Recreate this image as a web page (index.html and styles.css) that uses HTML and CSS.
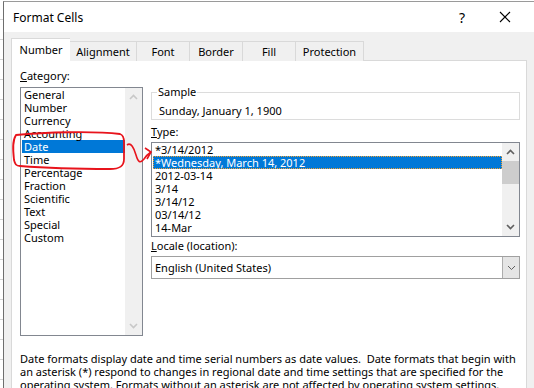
FILE: index.html
```html
<!DOCTYPE html>
<html>
<head>
    <title>Format Cells</title>
    <link rel="stylesheet" href="styles.css">
</head>
<body>
    <div class="dialog">
        <div class="titlebar">
            <span class="title">Format Cells</span>
            <span class="help">?</span>
            <svg class="close" width="12" height="12" viewBox="0 0 12 12">
                <path d="M1 1 L11 11 M11 1 L1 11" stroke="#000" stroke-width="1.1" fill="none"/>
            </svg>
        </div>

        <div class="dialog-body">
            <div class="tabs">
                <div class="tab active">Number</div>
                <div class="tab">Alignment</div>
                <div class="tab">Font</div>
                <div class="tab">Border</div>
                <div class="tab">Fill</div>
                <div class="tab">Protection</div>
            </div>

            <div class="panel">
                <div class="panel-main">
                    <div class="cat-col">
                        <div class="field-label"><u>C</u>ategory:</div>
                        <div class="listbox cat-list">
                            <div class="items">
                                <div class="item">General</div>
                                <div class="item">Number</div>
                                <div class="item">Currency</div>
                                <div class="item">Accounting</div>
                                <div class="item selected">Date</div>
                                <div class="item">Time</div>
                                <div class="item">Percentage</div>
                                <div class="item">Fraction</div>
                                <div class="item">Scientific</div>
                                <div class="item">Text</div>
                                <div class="item">Special</div>
                                <div class="item">Custom</div>
                            </div>
                            <div class="scrollbar disabled">
                                <svg class="arrow" width="9" height="6" viewBox="0 0 9 6"><path d="M1 5 L4.5 1.5 L8 5" stroke="currentColor" stroke-width="1.6" fill="none"/></svg>
                                <div class="track"></div>
                                <svg class="arrow" width="9" height="6" viewBox="0 0 9 6"><path d="M1 1 L4.5 4.5 L8 1" stroke="currentColor" stroke-width="1.6" fill="none"/></svg>
                            </div>
                        </div>
                    </div>

                    <div class="right-col">
                        <fieldset class="sample">
                            <legend>Sample</legend>
                            <div class="sample-text">Sunday, January 1, 1900</div>
                        </fieldset>

                        <div class="field-label type-label"><u>T</u>ype:</div>
                        <div class="listbox type-list">
                            <div class="items">
                                <div class="item">*3/14/2012</div>
                                <div class="item selected focused">*Wednesday, March 14, 2012</div>
                                <div class="item">2012-03-14</div>
                                <div class="item">3/14</div>
                                <div class="item">3/14/12</div>
                                <div class="item">03/14/12</div>
                                <div class="item">14-Mar</div>
                            </div>
                            <div class="scrollbar">
                                <svg class="arrow" width="9" height="6" viewBox="0 0 9 6"><path d="M1 5 L4.5 1.5 L8 5" stroke="currentColor" stroke-width="1.6" fill="none"/></svg>
                                <div class="track"><div class="thumb"></div></div>
                                <svg class="arrow" width="9" height="6" viewBox="0 0 9 6"><path d="M1 1 L4.5 4.5 L8 1" stroke="currentColor" stroke-width="1.6" fill="none"/></svg>
                            </div>
                        </div>

                        <div class="field-label locale-label"><u>L</u>ocale (location):</div>
                        <div class="combo">
                            <span class="combo-value">English (United States)</span>
                            <span class="combo-btn">
                                <svg width="9" height="6" viewBox="0 0 9 6"><path d="M1 1 L4.5 4.5 L8 1" stroke="#606060" stroke-width="1" fill="none"/></svg>
                            </span>
                        </div>
                    </div>
                </div>

                <p class="desc">Date formats display date and time serial numbers as date values.&nbsp; Date formats that begin with an asterisk (*) respond to changes in regional date and time settings that are specified for the operating system. Formats without an asterisk are not affected by operating system settings.</p>
            </div>
        </div>

        <!-- hand drawn markup on top of the screenshot -->
        <svg class="annot" width="160" height="50" viewBox="0 0 160 50">
            <path d="M16 9 C45 6, 95 5, 120 8 C123 9, 124 12, 124 16 L124 33 C124 40, 120 43, 110 43 C80 43, 45 42, 20 40 C16 40, 15 38, 14 34 C13 25, 12 15, 16 9 Z" stroke="#e8141c" stroke-width="1.8" fill="none"/>
            <path d="M127 19 C131 16, 134 22, 136 29 C138 36, 140 38, 144 33 C146 30, 148 28, 151 26" stroke="#e8141c" stroke-width="1.6" fill="none"/>
            <path d="M145 22 L151 26 L147 33" stroke="#e8141c" stroke-width="1.6" fill="none"/>
        </svg>
    </div>
</body>
</html>
```

FILE: styles.css
```css
body {
    margin: 0;
    height: 388px;
    overflow: hidden;
    font-family: "Noto Sans", "Open Sans", sans-serif;
    font-size: 11px;
    color: #000;
    background-color: #fff;
    background-image:
        repeating-linear-gradient(to bottom, transparent 0, transparent 19px, #d4d4d4 19px, #d4d4d4 20px);
}

.dialog {
    position: relative;
    margin: 1px 0 0 3px;
    border-left: 1px solid #6e6e6e;
    border-top: 1px solid #9a9a9a;
    background-color: #f0f0f0;
    height: 400px;
}

.titlebar {
    display: flex;
    align-items: center;
    height: 30px;
    background-color: #fff;
    padding-left: 9px;
    font-size: 12px;
}

.title {
    flex: 1;
}

.help {
    font-size: 14px;
    margin-right: 34px;
}

.close {
    margin-right: 23px;
}

.dialog-body {
    padding: 7px 7px 0 7px;
}

.tabs {
    display: flex;
    align-items: flex-end;
    height: 22px;
    position: relative;
    z-index: 1;
    margin-bottom: -1px;
}

.tab {
    height: 19px;
    line-height: 20px;
    border: 1px solid #d9d9d9;
    border-bottom: none;
    border-left: none;
    background-color: #f0f0f0;
    text-align: center;
}

.tab:nth-child(2) { width: 66px; }
.tab:nth-child(3) { width: 52px; }
.tab:nth-child(4) { width: 52px; }
.tab:nth-child(5) { width: 52px; }
.tab:nth-child(6) { width: 67px; }

.tab.active {
    width: 58px;
    height: 22px;
    line-height: 21px;
    background-color: #fff;
    border-left: 1px solid #d9d9d9;
    border-right: none;
}

.panel {
    background-color: #fff;
    border: 1px solid #d9d9d9;
    height: 340px;
    width: 516px;
    padding: 7px 0 0 8px;
    box-sizing: border-box;
}

.panel-main {
    display: flex;
    gap: 8px;
}

.field-label {
    height: 16px;
    line-height: 16px;
    margin-bottom: 3px;
}

.listbox {
    display: flex;
    border: 1px solid #828790;
    background-color: #fff;
    box-sizing: border-box;
}

.cat-list {
    width: 123px;
    height: 249px;
}

.items {
    flex: 1;
}

.item {
    height: 13px;
    line-height: 13px;
    margin-left: 1px;
    padding-left: 2px;
    white-space: nowrap;
}

.item.selected {
    background-color: #0078d7;
    color: #fff;
}

.item.focused {
    outline: 1px dotted #f0a030;
    outline-offset: -1px;
}

.scrollbar {
    width: 17px;
    display: flex;
    flex-direction: column;
    align-items: center;
    background-color: #f0f0f0;
    color: #606060;
}

.scrollbar.disabled {
    color: #c8c8c8;
}

.scrollbar .arrow {
    margin: 6px 0;
    flex: none;
}

.track {
    flex: 1;
    width: 100%;
}

.thumb {
    height: 23px;
    background-color: #cdcdcd;
}

.right-col {
    width: 369px;
}

.sample {
    margin: 17px 0 0 0;
    padding: 0 5px 1px 5px;
    border: 1px solid #dcdcdc;
}

.sample legend {
    padding: 0 1px;
    line-height: 14px;
}

.sample-text {
    margin: 5px 0 0 2px;
    line-height: 14px;
}

.type-label {
    margin-top: 4px;
    margin-bottom: 2px;
}

.type-list {
    height: 95px;
}

.locale-label {
    margin-top: 1px;
    margin-bottom: 2px;
}

.combo {
    display: flex;
    align-items: stretch;
    height: 23px;
    border: 1px solid #a0a0a0;
    box-sizing: border-box;
}

.combo-value {
    flex: 1;
    line-height: 21px;
    padding-left: 3px;
}

.combo-btn {
    width: 16px;
    display: flex;
    align-items: center;
    justify-content: center;
    background-color: #e5e5e5;
    border-left: 1px solid #adadad;
}

.desc {
    margin: 16px 0 0 0;
    line-height: 13px;
    width: 504px;
}

.annot {
    position: absolute;
    left: -4px;
    top: 124px;
}
```
